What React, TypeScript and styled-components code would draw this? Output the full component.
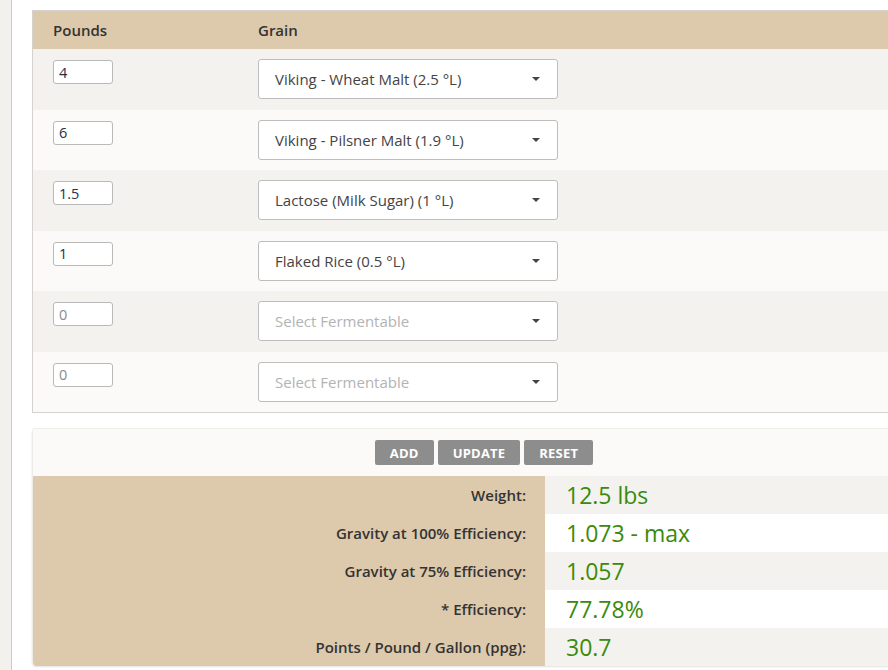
import React from 'react';
import styled, { createGlobalStyle } from 'styled-components';

const GlobalStyle = createGlobalStyle`
  html, body {
    margin: 0;
    padding: 0;
    overflow: hidden;
    background: #ffffff;
    font-family: 'Open Sans', 'Noto Sans', 'Liberation Sans', sans-serif;
    color: #333333;
  }
`;

const Page = styled.div`
  display: flex;
  flex-direction: row;
  min-height: 670px;
  width: 960px;
`;

const SideStrip = styled.div`
  width: 11px;
  flex-shrink: 0;
  background: #f3f1ed;
  border-right: 1px solid #cdcbc8;
`;

const Main = styled.div`
  flex: 1;
  padding: 10px 0 0 20px;
  display: flex;
  flex-direction: column;
  gap: 15px;
`;

const GrainTable = styled.div`
  width: 900px;
  border: 1px solid #d6d3ce;
`;

const HeaderRow = styled.div`
  display: flex;
  align-items: center;
  height: 38px;
  background: #ddc9ab;
  font-size: 15px;
  font-weight: 600;
  color: #333333;
`;

const PoundsCol = styled.div`
  width: 205px;
  padding-left: 20px;
  flex-shrink: 0;
`;

const GrainCol = styled.div`
  flex: 1;
`;

const Row = styled.div<{ $odd: boolean }>`
  display: flex;
  align-items: flex-start;
  height: 60.5px;
  padding-top: 10px;
  box-sizing: border-box;
  background: ${({ $odd }) => ($odd ? '#f4f2ef' : '#fbfaf8')};
`;

const PoundsInput = styled.input<{ $empty: boolean }>`
  width: 60px;
  height: 24px;
  margin-top: 1px;
  box-sizing: border-box;
  border: 1px solid #b9b9b9;
  border-radius: 3px;
  background: #ffffff;
  padding: 0 5px;
  font-family: inherit;
  font-size: 14.5px;
  color: ${({ $empty }) => ($empty ? '#8b8b8b' : '#1f2f4a')};
  outline: none;
`;

const Select = styled.div<{ $placeholder: boolean }>`
  width: 300px;
  height: 40px;
  box-sizing: border-box;
  border: 1px solid #bdbdbd;
  border-radius: 3px;
  background: #ffffff;
  display: flex;
  align-items: center;
  justify-content: space-between;
  padding: 0 17px 0 16px;
  font-size: 15px;
  color: ${({ $placeholder }) => ($placeholder ? '#b3b3b3' : '#444444')};
`;

const Caret = styled.span`
  width: 0;
  height: 0;
  border-left: 4px solid transparent;
  border-right: 4px solid transparent;
  border-top: 4px solid #444444;
`;

const ResultCard = styled.div`
  width: 902px;
  border: 1px solid #eeece8;
  border-bottom: none;
  border-radius: 4px 4px 0 4px;
  overflow: hidden;
  box-shadow: 0 1px 2px rgba(0, 0, 0, 0.12);
`;

const ButtonBar = styled.div`
  display: flex;
  justify-content: center;
  gap: 4px;
  height: 47px;
  padding-top: 11px;
  box-sizing: border-box;
  background: #fbfaf8;
`;

const ActionButton = styled.button`
  height: 25px;
  padding: 0 15px;
  border: none;
  border-radius: 2px;
  background: #8d8d8d;
  color: #ffffff;
  font-family: inherit;
  font-size: 13px;
  font-weight: 700;
  letter-spacing: 0.2px;
  text-transform: uppercase;
  cursor: pointer;
`;

const StatsGrid = styled.div`
  display: grid;
  grid-template-columns: 512px 1fr;
`;

const StatLabel = styled.div`
  height: 38px;
  display: flex;
  align-items: center;
  justify-content: flex-end;
  padding-right: 19px;
  background: #ddc9ab;
  font-size: 15px;
  font-weight: 600;
  color: #333333;
`;

const StatValue = styled.div<{ $odd: boolean }>`
  height: 38px;
  display: flex;
  align-items: center;
  padding-left: 21px;
  background: ${({ $odd }) => ($odd ? '#f4f2ef' : '#ffffff')};
  font-size: 23px;
  color: #3a8a0c;
`;

const grains = [
  { pounds: '4', name: 'Viking - Wheat Malt (2.5 °L)' },
  { pounds: '6', name: 'Viking - Pilsner Malt (1.9 °L)' },
  { pounds: '1.5', name: 'Lactose (Milk Sugar) (1 °L)' },
  { pounds: '1', name: 'Flaked Rice (0.5 °L)' },
  { pounds: '0', name: '' },
  { pounds: '0', name: '' },
];

const stats = [
  { label: 'Weight:', value: '12.5 lbs' },
  { label: 'Gravity at 100% Efficiency:', value: '1.073 - max' },
  { label: 'Gravity at 75% Efficiency:', value: '1.057' },
  { label: '* Efficiency:', value: '77.78%' },
  { label: 'Points / Pound / Gallon (ppg):', value: '30.7' },
];

const App = () => {
  return (
    <>
      <GlobalStyle />
      <Page>
        <SideStrip />
        <Main>
          <GrainTable>
            <HeaderRow>
              <PoundsCol>Pounds</PoundsCol>
              <GrainCol>Grain</GrainCol>
            </HeaderRow>
            {grains.map((g, i) => (
              <Row key={i} $odd={i % 2 === 0}>
                <PoundsCol>
                  <PoundsInput $empty={g.pounds === '0'} defaultValue={g.pounds} />
                </PoundsCol>
                <GrainCol>
                  <Select $placeholder={!g.name}>
                    <span>{g.name || 'Select Fermentable'}</span>
                    <Caret />
                  </Select>
                </GrainCol>
              </Row>
            ))}
          </GrainTable>

          <ResultCard>
            <ButtonBar>
              <ActionButton>Add</ActionButton>
              <ActionButton>Update</ActionButton>
              <ActionButton>Reset</ActionButton>
            </ButtonBar>
            <StatsGrid>
              {stats.map((s, i) => (
                <React.Fragment key={s.label}>
                  <StatLabel>{s.label}</StatLabel>
                  <StatValue $odd={i % 2 === 0}>{s.value}</StatValue>
                </React.Fragment>
              ))}
            </StatsGrid>
          </ResultCard>
        </Main>
      </Page>
    </>
  );
};

export default App;
